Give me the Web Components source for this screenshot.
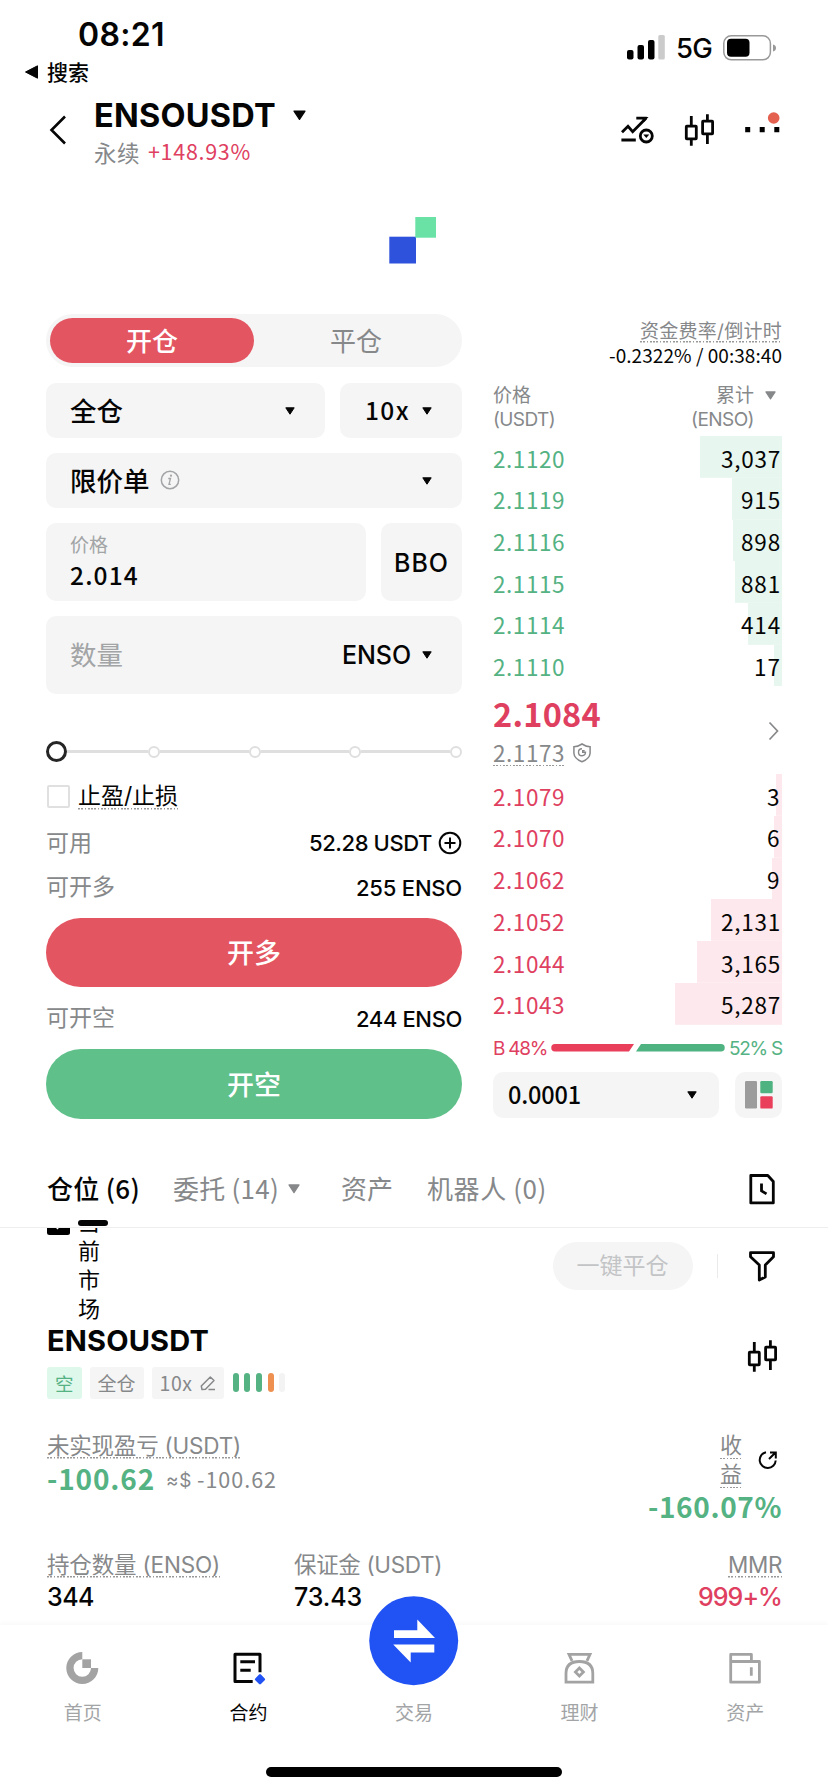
<!DOCTYPE html>
<html lang="zh-CN">
<head>
<meta charset="utf-8">
<title>ENSOUSDT 永续</title>
<style>
  body {
    margin: 0;
    background: #fff;
    color: #050505;
    font-family: Inter, "Noto Sans CJK SC", sans-serif;
    --red: #e35561;
    --price-red: #e0405f;
    --green: #5fc08a;
    --price-green: #54b283;
    --gray: #86888a;
    --light-gray: #a2a4a6;
    --fill: #f5f5f5;
  }
</style>
</head>
<body>
<trade-app></trade-app>

<script>
/**
 * Defines a custom element with a template in an open shadow root.
 *
 * @param {string} name - The tag name.
 * @param {string} html - Styles and markup.
 */
const component = (name, html) => {
  const template = document.createElement('template')
  template.innerHTML = html
  customElements.define(name, class extends HTMLElement {
    connectedCallback () {
      if (this.shadowRoot) return
      this.attachShadow({ mode: 'open' }).appendChild(template.content.cloneNode(true))
    }
  })
}

// Icon name: [width, height, markup].
const candles = '<g fill="none" stroke="currentColor" stroke-width="2.8"><rect x="1.3" y="12.2" width="10" height="12.6" rx=".5"/><path d="M6.3 2v10M6.3 25v6.7"/><rect x="17.6" y="7.2" width="10" height="12.6" rx=".5"/><path d="M22.4.3v7M22.4 20v10"/></g>'
const icons = {
  back: [16, 30, '<path d="M15 1.5 1.5 15 15 28.5" fill="none" stroke="currentColor" stroke-width="2.6"/>'],
  caret: [10, 8, '<path d="M.8.8h8.4L5 7.2z" fill="currentColor" stroke="currentColor" stroke-linejoin="round"/>'],
  backtri: [13, 14, '<path d="M.5 7 12.5.8v12.4z" fill="currentColor" stroke="currentColor" stroke-linejoin="round"/>'],
  signal: [38, 25, '<rect y="15" width="6.5" height="9.5" rx="2"/><rect x="10.5" y="10" width="6.5" height="14.5" rx="2"/><rect x="21" y="5" width="6.5" height="19.5" rx="2"/><rect x="31.3" width="6.5" height="24.5" rx="1.5" fill="#cbcbcb"/>'],
  battery: [54, 26, '<rect x=".8" y=".8" width="46.6" height="24" rx="7.5" fill="none" stroke="#999" stroke-width="1.5"/><rect x="4" y="3.8" width="22.5" height="18" rx="4"/><path d="M50 9.500v7q3-.8 3-3.500t-3-3.500z" fill="#999"/>'],
  trend: [34, 32, '<g fill="none" stroke="currentColor" stroke-width="2.8"><path d="M1 18.300l6-6 4.700 5.400L25 4.300M15.300 4.200h10.500M.4 26h14.400"/><circle cx="25.300" cy="22" r="6"/></g><path d="M22.300 20.600h6l-3 3.400zM20.500 3h7l-4.500 5z" fill="currentColor"/>'],
  candles: [30, 32, candles],
  more: [36, 32, '<path d="M.2 13h5v5.200h-5zM14.700 13h5v5.200h-5zM29.300 13h5v5.200h-5z"/><circle cx="28.700" cy="4" r="5.800" fill="#e4604f"/>'],
  brand: [48, 48, '<rect x=".3" y="19.700" width="26.700" height="26.800" fill="#2f52dc"/><rect x="26.300" width="20.700" height="20.700" fill="#6ae2a6"/>'],
  info: [20, 20, '<circle cx="10" cy="10" r="8.700" fill="none" stroke="currentColor" stroke-width="1.500"/><path d="M8.300 8.500h2.200L9 14.300h1.800" fill="none" stroke="currentColor" stroke-width="1.300"/><circle cx="11" cy="5.700" r="1.100" fill="currentColor"/>'],
  plus: [24, 24, '<path d="M12 6.500v11M6.500 12h11" stroke="currentColor" stroke-width="2"/><circle cx="12" cy="12" r="10.300" fill="none" stroke="currentColor" stroke-width="2"/>'],
  next: [11, 20, '<path d="M1.500 1.500 9.500 10l-8 8.500" fill="none" stroke="currentColor" stroke-width="1.700"/>'],
  shield: [18, 20, '<path d="M9 1Q5 3.600.9 3.800v6.400Q1.200 15.500 9 18.800q7.800-3.300 8.100-8.600V3.800Q13 3.600 9 1z" fill="none" stroke="currentColor" stroke-width="1.500"/><path d="M9 5.700a3.500 3.500 0 1 0 3.500 3.600H9.700V7.600h2" fill="none" stroke="currentColor" stroke-width="1.400"/>'],
  layout: [28, 28, '<rect width="12" height="27.500" rx="1.200" fill="#9c9c9c"/><rect x="15.300" width="12.400" height="12.300" rx="1.200" fill="#4fb281"/><rect x="15.300" y="15.300" width="12.400" height="12.300" rx="1.200" fill="#e93f5b"/>'],
  history: [26, 31, '<path d="M1.800 1.500h17l5.500 6v21.400H1.800zM12.500 9.500v7.400l5 3" fill="none" stroke="currentColor" stroke-width="2.800" stroke-linejoin="round"/>'],
  filter: [26, 31, '<path d="M1.500 1.700h23v4L16.300 14v12l-6 3V14L1.500 5.700z" fill="none" stroke="currentColor" stroke-width="2.800" stroke-linejoin="round"/>'],
  edit: [16, 16, '<path d="M2 14.500 1.300 11l9-9 3.700 3.500L5.500 14.300zM8.500 14.500H15" fill="none" stroke="currentColor" stroke-width="1.500" stroke-linejoin="round"/>'],
  share: [19, 18, '<path d="M7 1.200a8 8 0 1 0 9.700 8.300M10 8l6-6M11 1.600h5.800v6" fill="none" stroke="currentColor" stroke-width="2"/>'],
  check: [23, 23, '<rect width="23" height="23" rx="2.500"/><path d="m5 11 5.500 5L18 7" fill="none" stroke="#fff" stroke-width="2"/>'],
  home: [33, 33, '<path d="M16.300 0a16 16 0 1 0 16 16h-7.300a8.700 8.700 0 1 1-8.700-8.700z" fill="currentColor"/><path d="M16.300 7.300H25V16h-8.700z" fill="currentColor"/>'],
  contract: [33, 33, '<path d="M20.700 29.400H3V2.300h25v18M8.300 9.700H23M8.300 18.200h10.400" fill="none" stroke="currentColor" stroke-width="3" stroke-linejoin="round"/><rect x="24" y="23.300" width="8" height="8" rx="1.300" transform="rotate(45 28 27.300)" fill="#2152f3"/>'],
  swap: [90, 90, '<circle cx="44.700" cy="44.700" r="44.500" fill="#2152f3"/><path d="M25 34.200h23.300V23.500L66 42H25zM65.300 48.500H24.200l17.500 18V56.500h23.600z" fill="#fff"/>'],
  earn: [31, 33, '<path d="M8 8.800 5 2.300h21l-3 6.500M2 30.200V21.500Q2 9.500 15.400 9.500T28.800 21.500v8.700zM15.400 16l4 4-4 4-4-4z" fill="none" stroke="currentColor" stroke-width="2.800"/>'],
  wallet: [33, 33, '<path d="M1.700 9.500v20.700h28.700V9.500zM1.700 10V2.400h20.700v7M22.300 15.300v8.400" fill="none" stroke="currentColor" stroke-width="2.800" stroke-linejoin="round"/>']
}

customElements.define('ui-icon',
  /**
   * An inline icon, picked by name and drawn at its natural size.
   */
  class extends HTMLElement {
    connectedCallback () {
      if (this.shadowRoot) return
      const [w, h, markup] = icons[this.getAttribute('name')]
      const k = Number(this.getAttribute('scale') || 1)
      this.attachShadow({ mode: 'open' }).innerHTML = `
        <style>
          :host { display: block; flex: none; }
          svg { display: block; overflow: visible; }
        </style>
        <svg width="${w * k}" height="${h * k}" viewBox="0 0 ${w} ${h}">${markup}</svg>`
    }
  })

customElements.define('ui-text',
  /**
   * A line of text. Attributes: size, weight, width, num, dotted.
   * The width is reached by tracking; num picks the figures with a footed one.
   * --drop lowers the baseline inside the line.
   */
  class extends HTMLElement {
    connectedCallback () {
      if (this.shadowRoot) return
      this.attachShadow({ mode: 'open' }).innerHTML = `
        <style>
          :host { display: block; flex: none; width: max-content; white-space: nowrap; line-height: 1.2;
            font-size: ${this.getAttribute('size') || 22}px; font-weight: ${this.getAttribute('weight') || 400}; }
          span { line-height: 0; vertical-align: calc(-1 * var(--drop, 1px)); }
          :host([num]) span { font-family: "Noto Sans CJK SC", sans-serif; }
          :host([dotted]) { background: repeating-linear-gradient(90deg, #999 0 1.700px, transparent 1.700px 3.300px) bottom / 100% 1.500px no-repeat; }
        </style>
        <span><slot></slot></span>`
      const width = Number(this.getAttribute('width'))
      if (width) {
        const natural = this.shadowRoot.querySelector('span').getBoundingClientRect().width
        const spacing = (width - natural) / this.textContent.length
        this.style.letterSpacing = `${spacing.toFixed(3)}px`
      }
    }
  })

component('status-bar', `
  <style>
    :host { display: flex; justify-content: space-between; height: 90px; padding: 0 51px 0 25px; }
    .left { padding-top: 15px; }
    .time { height: 39px; display: flex; align-items: center; padding-left: 53px; }
    .return { height: 36px; display: flex; align-items: center; gap: 9px; }
    .right { display: flex; align-items: center; gap: 11px; height: 30px; padding-top: 32.500px; }
  </style>
  <div class="left">
    <div class="time"><ui-text size="32" weight="600" width="87">08:21</ui-text></div>
    <div class="return"><ui-icon name="backtri"></ui-icon><ui-text size="21" weight="500">搜索</ui-text></div>
  </div>
  <div class="right">
    <ui-icon name="signal"></ui-icon>
    <ui-text size="27.500" weight="500" width="36">5G</ui-text>
    <ui-icon name="battery"></ui-icon>
  </div>`)

component('pair-header', `
  <style>
    :host { display: flex; height: 90px; padding: 0 47px 0 50px; --drop: 0px; }
    .back { padding-top: 25px; margin-right: 28px; }
    .pair { padding-top: 6px; flex: 1; }
    .row { display: flex; align-items: center; }
    .name { height: 39px; gap: 17px; }
    .change { height: 36px; gap: 8px; }
    .muted { color: var(--gray); }
    .up { color: var(--price-red); }
    .tools { display: flex; align-items: flex-start; gap: 30px; padding-top: 24px; }
  </style>
  <ui-icon class="back" name="back"></ui-icon>
  <div class="pair">
    <div class="row name"><ui-text size="32.500" weight="680" width="182">ENSOUSDT</ui-text><ui-icon name="caret" scale="1.300"></ui-icon></div>
    <div class="row change"><ui-text class="muted" size="22.500" width="46">永续</ui-text><ui-text class="up" num size="21.500" width="103">+148.93%</ui-text></div>
  </div>
  <div class="tools"><ui-icon name="trend"></ui-icon><ui-icon name="candles"></ui-icon><ui-icon name="more"></ui-icon></div>`)

component('ui-field', `
  <style>
    :host { display: flex; align-items: center; justify-content: space-between; box-sizing: border-box; height: 55px; padding: 0 30px 0 24px; border-radius: 10px; background: var(--fill); }
  </style>
  <slot></slot>`)

component('pill-button', `
  <style>
    :host { display: flex; align-items: center; justify-content: center; border-radius: 50px; color: #fff; }
  </style>
  <slot></slot>`)

component('amount-slider', `
  <style>
    :host { display: flex; align-items: center; height: 41px; }
    i { flex: none; box-sizing: border-box; width: 12px; height: 12px; border: 2px solid #dfdfdf; border-radius: 50%; }
    i.thumb { width: 21px; height: 21px; border: 3.200px solid #252525; }
    b { flex: 1; height: 2.500px; background: #dfdfdf; }
    b.first { flex: none; width: 81px; }
  </style>
  <i class="thumb"></i><b class="first"></b><i></i><b></b><i></i><b></b><i></i><b></b><i></i>`)

component('order-form', `
  <style>
    :host { display: block; width: 416px; }
    .seg { display: flex; box-sizing: border-box; height: 53px; padding: 4px; border-radius: 27px; background: var(--fill); margin-bottom: 16px; }
    .seg > * { flex: 1; }
    .open { background: var(--red); }
    .close { color: var(--gray); }
    .row { display: flex; gap: 15px; margin-bottom: 15px; }
    .grow { flex: 1; }
    .kind { display: flex; align-items: center; gap: 10px; color: var(--light-gray); }
    .kind > :first-child { color: #050505; }
    .muted { color: var(--gray); }
    .light { color: var(--light-gray); }
    .tall { height: 78px; }
    .unit, .value { display: flex; align-items: center; gap: 11px; }
    .value { gap: 6px; --drop: 0px; }
    .line { display: flex; align-items: center; justify-content: space-between; }
    .tpsl { display: flex; align-items: center; gap: 8px; height: 48px; }
    .box { box-sizing: border-box; width: 23px; height: 23px; margin-left: 1px; border: 2px solid #e0e0e0; border-radius: 2px; }
  </style>
  <div class="seg">
    <pill-button class="open"><ui-text size="26" weight="500">开仓</ui-text></pill-button>
    <pill-button class="close"><ui-text size="26">平仓</ui-text></pill-button>
  </div>
  <div class="row">
    <ui-field class="grow"><ui-text size="26.500" weight="500">全仓</ui-text><ui-icon name="caret"></ui-icon></ui-field>
    <ui-field style="width:122px;padding-left:25px"><ui-text num size="24.500" weight="500" width="45">10x</ui-text><ui-icon name="caret"></ui-icon></ui-field>
  </div>
  <div class="row">
    <ui-field class="grow"><div class="kind"><ui-text size="26.500" weight="500">限价单</ui-text><ui-icon name="info"></ui-icon></div><ui-icon name="caret"></ui-icon></ui-field>
  </div>
  <div class="row">
    <ui-field class="grow tall" style="--drop:-1px">
      <div>
        <ui-text class="light" size="19" style="line-height:30px">价格</ui-text>
        <ui-text num size="24.500" weight="500" width="69" style="line-height:30px">2.014</ui-text>
      </div>
    </ui-field>
    <ui-field class="tall" style="width:81px;padding:0 0 0 13px"><ui-text size="25" weight="500" width="55">BBO</ui-text></ui-field>
  </div>
  <div class="row" style="margin-bottom:37px">
    <ui-field class="grow tall"><ui-text class="light" size="26.500">数量</ui-text><div class="unit" style="--drop:0px"><ui-text size="25" weight="500" width="69">ENSO</ui-text><ui-icon name="caret"></ui-icon></div></ui-field>
  </div>
  <amount-slider></amount-slider>
  <div class="tpsl"><span class="box"></span><ui-text dotted size="23" width="100">止盈/止损</ui-text></div>
  <div class="line" style="height:46px"><ui-text class="muted" size="23">可用</ui-text><div class="value"><ui-text size="22" weight="500" width="123">52.28 USDT</ui-text><ui-icon name="plus"></ui-icon></div></div>
  <div class="line" style="height:42px"><ui-text class="muted" size="23">可开多</ui-text><ui-text size="22" weight="500" width="106">255 ENSO</ui-text></div>
  <pill-button style="height:69px;margin-top:10px;background:var(--red);--drop:2px"><ui-text size="27" weight="500">开多</ui-text></pill-button>
  <div class="line" style="height:62px"><ui-text class="muted" size="23">可开空</ui-text><ui-text size="22" weight="500" width="106">244 ENSO</ui-text></div>
  <pill-button style="height:70px;background:var(--green);--drop:2px"><ui-text size="27" weight="500">开空</ui-text></pill-button>`)

customElements.define('book-side',
  /**
   * Price levels of one side. Each level is price:total:depth bar width.
   */
  class extends HTMLElement {
    connectedCallback () {
      if (this.shadowRoot) return
      const rows = this.getAttribute('levels').split(' ').map(level => {
        const [price, total, depth] = level.split(':')
        const width = 1 + (total.length * 13) - (total.includes(',') ? 6 : 0)
        return `
          <div class="level" style="background-size:${depth}px 100%">
            <ui-text class="price" num size="22.500" width="72">${price}</ui-text>
            <ui-text num size="22.500" width="${width}">${total}</ui-text>
          </div>`
      })
      this.attachShadow({ mode: 'open' }).innerHTML = `
        <style>
          :host { display: block; --drop: 2px; }
          .level { display: flex; align-items: center; justify-content: space-between; height: 41.700px; padding-right: 1px;
            background: linear-gradient(var(--depth), var(--depth)) right / 0 100% no-repeat; }
          .price { color: var(--price); }
        </style>
        ${rows.join('')}`
    }
  })

component('order-book', `
  <style>
    :host { display: block; width: 289px; }
    .muted { color: var(--gray); }
    .funding { display: flex; flex-direction: column; align-items: flex-end; padding-top: 6px; }
    .cell { display: flex; align-items: center; height: 24px; }
    .head { display: flex; justify-content: space-between; margin: 14px 0 4.500px; color: var(--gray); }
    .head .total { display: flex; flex-direction: column; align-items: flex-end; padding-right: 28px; }
    .total .cell { gap: 11px; }
    .total .sort { margin-right: -22px; }
    .sell { --price: var(--price-green); --depth: #e7f6ef; }
    .buy { --price: var(--price-red); --depth: #fde9ed; }
    .last { display: flex; justify-content: space-between; box-sizing: border-box; height: 88px; padding: 8px 3px 0 0; color: var(--gray); }
    .now { display: flex; align-items: center; height: 40px; color: var(--price-red); }
    .mark { display: flex; align-items: center; gap: 8px; height: 37px; }
    .chev { padding-top: 27px; }
    .ratio { display: flex; align-items: center; height: 47px; gap: 4px; color: var(--price-red); }
    .ratio svg { flex: none; }
    .ratio .s { color: var(--price-green); }
    .foot { display: flex; gap: 16px; }
  </style>
  <div class="funding">
    <ui-text class="muted" dotted size="19" width="142" style="margin-bottom:1px">资金费率/倒计时</ui-text>
    <ui-text num size="19" width="173" style="line-height:26px;--drop:0px">-0.2322% / 00:38:40</ui-text>
  </div>
  <div class="head">
    <div>
      <div class="cell"><ui-text size="19">价格</ui-text></div>
      <div class="cell"><ui-text size="19" width="62">(USDT)</ui-text></div>
    </div>
    <div class="total">
      <div class="cell sort"><ui-text size="19">累计</ui-text><ui-icon name="caret" scale="1.100"></ui-icon></div>
      <div class="cell"><ui-text size="19" width="63">(ENSO)</ui-text></div>
    </div>
  </div>
  <book-side class="sell" levels="2.1120:3,037:82 2.1119:915:50 2.1116:898:49 2.1115:881:47 2.1114:414:34 2.1110:17:8"></book-side>
  <div class="last">
    <div>
      <div class="now"><ui-text num size="32.500" weight="700" width="108">2.1084</ui-text></div>
      <div class="mark"><ui-text num dotted size="22.500" width="72">2.1173</ui-text><ui-icon name="shield"></ui-icon></div>
    </div>
    <ui-icon class="chev" name="next"></ui-icon>
  </div>
  <book-side class="buy" levels="2.1079:3:6 2.1070:6:8 2.1062:9:10 2.1052:2,131:71 2.1044:3,165:85 2.1043:5,287:107"></book-side>
  <div class="ratio">
    <ui-text size="19" width="54">B 48%</ui-text>
    <svg width="174" height="8"><path d="M4 0h79l-5 7.500H4A3.700 3.700 0 0 1 4 0z" fill="#e93f5b"/><path d="M90 0h80a3.700 3.700 0 0 1 0 7.500H85z" fill="#4fb281"/></svg>
    <ui-text class="s" size="19" width="53">52% S</ui-text>
  </div>
  <div class="foot">
    <ui-field style="width:226px;height:46px;padding:0 22px 0 15px;--drop:2px"><ui-text num size="23.500" weight="500" width="73">0.0001</ui-text><ui-icon name="caret"></ui-icon></ui-field>
    <ui-field style="width:47px;height:46px;padding:0 0 0 9.500px"><ui-icon name="layout"></ui-icon></ui-field>
  </div>`)

component('account-tabs', `
  <style>
    :host { display: flex; align-items: center; position: relative; height: 76px; margin-top: 32px; padding: 0 53px 0 47px; border-bottom: 1.500px solid #eee; color: var(--gray); }
    .active { color: #050505; }
    /* marker of the active tab, lies on the border */
    .active::after { content: ""; position: absolute; left: 78px; bottom: 1px; width: 30px; height: 6.500px; border-radius: 4px; background: #050505; }
    ui-icon[name=history] { margin-left: auto; color: #050505; }
  </style>
  <ui-text class="active" num size="26" weight="500" width="93">仓位 (6)</ui-text>
  <ui-text num size="26" width="106" style="margin:0 9px 0 33px">委托 (14)</ui-text>
  <ui-icon name="caret" scale="1.200"></ui-icon>
  <ui-text size="26" width="52" style="margin:0 34px 0 41px">资产</ui-text>
  <ui-text num size="26" width="120">机器人 (0)</ui-text>
  <ui-icon name="history"></ui-icon>`)

component('market-filter', `
  <style>
    :host { display: flex; height: 94px; overflow: hidden; padding: 0 53px 0 47px; }
    .only { display: flex; gap: 8px; margin-top: -20.500px; }
    .only ui-icon { margin-top: 4px; }
    .label { width: 22px; font-size: 22px; line-height: 29px; word-break: break-all; }
    .right { display: flex; align-items: center; height: 48px; margin: 14px 0 0 auto; }
    pill-button { width: 140px; height: 48px; background: var(--fill); color: #c3c4c6; }
    .bar { width: 1.500px; height: 24px; margin: 0 31px 0 24px; background: #ebebeb; }
  </style>
  <div class="only"><ui-icon name="check"></ui-icon><div class="label">当前市场</div></div>
  <div class="right">
    <pill-button><ui-text size="23">一键平仓</ui-text></pill-button>
    <span class="bar"></span>
    <ui-icon name="filter"></ui-icon>
  </div>`)

component('ui-tag', `
  <style>
    :host { display: flex; align-items: center; gap: 7px; box-sizing: border-box; height: 32px; padding: 0 8px; border-radius: 3px; background: var(--fill); color: var(--gray); }
  </style>
  <slot></slot>`)

component('position-card', `
  <style>
    :host { display: block; padding: 0 46px 0 47px; }
    .top, .pnl { display: flex; justify-content: space-between; }
    .name { display: flex; align-items: center; height: 36px; }
    .tags { display: flex; gap: 8px; margin-top: 9px; --drop: 2px; }
    .short { background: #def8ec; color: var(--price-green); --drop: 1px; }
    .adl { display: flex; align-items: center; gap: 5.500px; height: 28px; padding: 1px 0 0 1px; }
    .adl i { width: 6.200px; height: 19px; border-radius: 3px; background: var(--price-green); }
    .pnl { margin-top: 31px; height: 119px; }
    .label { display: flex; align-items: center; height: 30px; color: var(--gray); --drop: 0px; }
    .value { display: flex; align-items: center; height: 40px; }
    .green { color: var(--price-green); }
    .muted { color: var(--gray); }
    .red { color: var(--price-red); }
    .roi { display: flex; flex-direction: column; align-items: flex-end; }
    .roi .head { display: flex; align-items: center; gap: 17px; padding-right: 4px; --drop: 0px; }
    .roi .stack { color: var(--gray); }
    .roi .stack > * { margin: 2px 0 0; line-height: 27px; }
    .stats { display: grid; grid-template-columns: 247px 1fr auto; }
    .stats .value { height: 34px; }
    .end { display: flex; flex-direction: column; align-items: flex-end; }
  </style>
  <div class="top">
    <div>
      <div class="name"><ui-text size="29" weight="680" width="162">ENSOUSDT</ui-text></div>
      <div class="tags">
        <ui-tag class="short"><ui-text size="18.500">空</ui-text></ui-tag>
        <ui-tag><ui-text size="19">全仓</ui-text></ui-tag>
        <ui-tag><ui-text num size="19.500" width="33">10x</ui-text><ui-icon name="edit"></ui-icon></ui-tag>
        <div class="adl"><i></i><i></i><i></i><i style="background:#ee9050"></i><i style="background:#f3f3f3"></i></div>
      </div>
    </div>
    <ui-icon name="candles" style="padding-top:18px;margin-right:4px"></ui-icon>
  </div>
  <div class="pnl">
    <div>
      <div class="label"><ui-text dotted size="22.500" width="194">未实现盈亏 (USDT)</ui-text></div>
      <div class="value"><ui-text class="green" num size="28" weight="700" width="108">-100.62</ui-text><ui-text class="muted" size="19" width="26" style="margin:0 5px 0 11px">≈$</ui-text><ui-text class="muted" num size="21.500" width="80">-100.62</ui-text></div>
    </div>
    <div class="roi">
      <div class="head">
        <div class="stack"><ui-text dotted size="22">收</ui-text><ui-text dotted size="22">益</ui-text></div>
        <ui-icon name="share" style="padding-top:2px"></ui-icon>
      </div>
      <div class="value"><ui-text class="green" num size="28" weight="600" width="134">-160.07%</ui-text></div>
    </div>
  </div>
  <div class="stats">
    <div>
      <div class="label"><ui-text dotted size="22.500" width="173">持仓数量 (ENSO)</ui-text></div>
      <div class="value"><ui-text size="25" weight="500" width="47">344</ui-text></div>
    </div>
    <div>
      <div class="label"><ui-text size="22.500" width="148">保证金 (USDT)</ui-text></div>
      <div class="value"><ui-text size="25" weight="500" width="68">73.43</ui-text></div>
    </div>
    <div class="end">
      <div class="label"><ui-text dotted size="22.500" width="54">MMR</ui-text></div>
      <div class="value red"><ui-text size="25" weight="500" width="84">999+%</ui-text></div>
    </div>
  </div>`)

component('nav-item', `
  <style>
    :host { display: flex; flex: 1; flex-direction: column; align-items: center; color: var(--light-gray); }
    .icon { height: 72px; padding-top: 27px; box-sizing: border-box; }
    .label { height: 34px; display: flex; align-items: center; font-size: 19px; line-height: 1.2; }
  </style>
  <div class="icon"><slot name="icon"></slot></div>
  <div class="label"><slot></slot></div>`)

component('tab-bar', `
  <style>
    :host { display: flex; flex-direction: column; align-items: center; height: 167px; margin-top: auto; background: #fff; box-shadow: 0 -3px 4px #fafafa; }
    nav { display: flex; width: 100%; }
    .active { color: #050505; }
    ui-icon[name=home], ui-icon[name=earn], ui-icon[name=wallet] { color: #a3a3a3; }
    /* raised over the edge of the bar */
    .swap { margin-top: -56px; }
    .home { width: 296px; height: 10px; margin: 35.500px 0 0; border-radius: 5px; background: #000; }
  </style>
  <nav>
    <nav-item><ui-icon slot="icon" name="home"></ui-icon>首页</nav-item>
    <nav-item class="active"><ui-icon slot="icon" name="contract"></ui-icon>合约</nav-item>
    <nav-item><ui-icon slot="icon" class="swap" name="swap"></ui-icon>交易</nav-item>
    <nav-item><ui-icon slot="icon" name="earn"></ui-icon>理财</nav-item>
    <nav-item><ui-icon slot="icon" name="wallet"></ui-icon>资产</nav-item>
  </nav>
  <div class="home"></div>`)

component('trade-app', `
  <style>
    :host { display: flex; flex-direction: column; width: 828px; height: 1792px; overflow: hidden; }
    .loader { box-sizing: border-box; height: 134px; padding: 37px 0 0 389px; }
    .trade { display: flex; gap: 31px; height: 805px; padding-left: 46px; }
  </style>
  <status-bar></status-bar>
  <pair-header></pair-header>
  <ui-icon class="loader" name="brand"></ui-icon>
  <div class="trade">
    <order-form></order-form>
    <order-book></order-book>
  </div>
  <account-tabs></account-tabs>
  <market-filter></market-filter>
  <position-card></position-card>
  <tab-bar></tab-bar>`)
</script>
</body>
</html>
